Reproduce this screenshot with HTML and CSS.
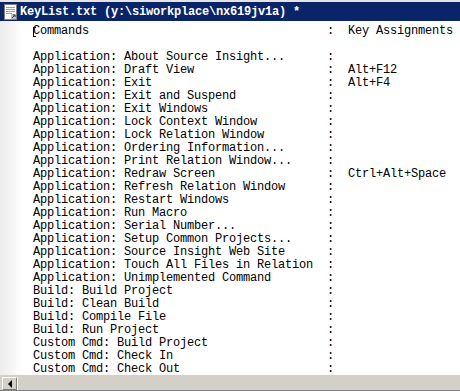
FILE: index.html
```html
<!DOCTYPE html>
<html lang="en">
<head>
    <meta charset="UTF-8">
    <title>KeyList.txt</title>
    <link rel="stylesheet" href="styles.css">
</head>
<body>
<div class="window">
    <div class="topline"></div>
    <div class="titlebar">
        <svg class="doc-icon" width="15" height="16" viewBox="0 0 15 16">
            <rect x="1.5" y="0.5" width="12" height="15" fill="#fff" stroke="#808080"/>
            <line x1="3" y1="3.5" x2="12" y2="3.5" stroke="#a0a0a0"/>
            <line x1="3" y1="5.5" x2="12" y2="5.5" stroke="#a0a0a0"/>
            <line x1="3" y1="7.5" x2="12" y2="7.5" stroke="#a0a0a0"/>
            <line x1="3" y1="9.5" x2="9" y2="9.5" stroke="#a0a0a0"/>
            <rect x="8" y="10" width="5" height="5" fill="#c0c0c0"/>
            <path d="M9 14 L12 11 M10 11 H12 V13" stroke="#404040" fill="none"/>
        </svg>
        <span class="title">KeyList.txt (y:\siworkplace\nx619jv1a) *</span>
    </div>

    <div class="editor">
        <div class="row"><span class="caret"></span><span class="cmd">Commands</span><span class="sep">:</span><span class="key">Key Assignments</span></div>
        <div class="row"></div>
        <div class="row"><span class="cmd">Application: About Source Insight...</span><span class="sep">:</span></div>
        <div class="row"><span class="cmd">Application: Draft View</span><span class="sep">:</span><span class="key">Alt+F12</span></div>
        <div class="row"><span class="cmd">Application: Exit</span><span class="sep">:</span><span class="key">Alt+F4</span></div>
        <div class="row"><span class="cmd">Application: Exit and Suspend</span><span class="sep">:</span></div>
        <div class="row"><span class="cmd">Application: Exit Windows</span><span class="sep">:</span></div>
        <div class="row"><span class="cmd">Application: Lock Context Window</span><span class="sep">:</span></div>
        <div class="row"><span class="cmd">Application: Lock Relation Window</span><span class="sep">:</span></div>
        <div class="row"><span class="cmd">Application: Ordering Information...</span><span class="sep">:</span></div>
        <div class="row"><span class="cmd">Application: Print Relation Window...</span><span class="sep">:</span></div>
        <div class="row"><span class="cmd">Application: Redraw Screen</span><span class="sep">:</span><span class="key">Ctrl+Alt+Space</span></div>
        <div class="row"><span class="cmd">Application: Refresh Relation Window</span><span class="sep">:</span></div>
        <div class="row"><span class="cmd">Application: Restart Windows</span><span class="sep">:</span></div>
        <div class="row"><span class="cmd">Application: Run Macro</span><span class="sep">:</span></div>
        <div class="row"><span class="cmd">Application: Serial Number...</span><span class="sep">:</span></div>
        <div class="row"><span class="cmd">Application: Setup Common Projects...</span><span class="sep">:</span></div>
        <div class="row"><span class="cmd">Application: Source Insight Web Site</span><span class="sep">:</span></div>
        <div class="row"><span class="cmd">Application: Touch All Files in Relation</span><span class="sep">:</span></div>
        <div class="row"><span class="cmd">Application: Unimplemented Command</span><span class="sep">:</span></div>
        <div class="row"><span class="cmd">Build: Build Project</span><span class="sep">:</span></div>
        <div class="row"><span class="cmd">Build: Clean Build</span><span class="sep">:</span></div>
        <div class="row"><span class="cmd">Build: Compile File</span><span class="sep">:</span></div>
        <div class="row"><span class="cmd">Build: Run Project</span><span class="sep">:</span></div>
        <div class="row"><span class="cmd">Custom Cmd: Build Project</span><span class="sep">:</span></div>
        <div class="row"><span class="cmd">Custom Cmd: Check In</span><span class="sep">:</span></div>
        <div class="row"><span class="cmd">Custom Cmd: Check Out</span><span class="sep">:</span></div>
    </div>

    <div class="hscroll">
        <div class="arrow-btn"><span class="arrow-left"></span></div>
        <div class="track"></div>
    </div>
</div>
</body>
</html>
```

FILE: styles.css
```css
body {
    margin: 0;
    padding: 0;
    background-color: #fff;
}

.window {
    width: 460px;
    height: 391px;
    display: flex;
    flex-direction: column;
    overflow: hidden;
}

.topline {
    height: 2px;
    background-color: #e4e4e4;
}

.titlebar {
    height: 19px;
    background-color: #0a246a;
    display: flex;
    align-items: center;
    padding-left: 3px;
    gap: 2px;
}

.doc-icon {
    flex: none;
}

.title {
    color: #fff;
    font-family: "Liberation Mono", monospace;
    font-size: 12px;
    font-weight: bold;
    letter-spacing: -0.2px;
    white-space: pre;
}

.editor {
    flex: 1;
    padding-top: 4px;
    padding-left: 33px;
    background: linear-gradient(to right, #ebebeb 0, #f6f6f6 12px, #fff 22px);
    font-family: "Liberation Mono", monospace;
    font-size: 12px;
    letter-spacing: -0.2px;
    color: #000;
    overflow: hidden;
}

.row {
    position: relative;
    display: flex;
    height: 13px;
    line-height: 13px;
    white-space: pre;
}

.cmd {
    width: 294px;
    flex: none;
}

.sep {
    width: 21px;
    flex: none;
}

.caret {
    position: absolute;
    left: 0;
    top: 2px;
    width: 1px;
    height: 10px;
    background-color: #000;
}

.caret::before, .caret::after {
    content: "";
    position: absolute;
    left: 0;
    width: 3px;
    height: 1px;
    background-color: #000;
}

.caret::before {
    top: 0;
}

.caret::after {
    bottom: 0;
}

.hscroll {
    height: 16px;
    box-sizing: border-box;
    border-top: 1px solid #d4d0c8;
    border-bottom: 1px solid #808080;
    background-color: #d4d0c8;
    display: flex;
    padding: 1px 0 0 2px;
}

.arrow-btn {
    width: 15px;
    height: 13px;
    box-sizing: border-box;
    background-color: #d4d0c8;
    border-top: 1px solid #fff;
    border-left: 1px solid #fff;
    border-right: 1px solid #808080;
    border-bottom: 1px solid #808080;
    display: flex;
    align-items: center;
    justify-content: center;
}

.arrow-left {
    width: 0;
    height: 0;
    border-top: 4px solid transparent;
    border-bottom: 4px solid transparent;
    border-right: 4px solid #000;
}

.track {
    flex: 1;
    border-left: 1px solid #fff;
    background-color: #d4d0c8;
}
```
